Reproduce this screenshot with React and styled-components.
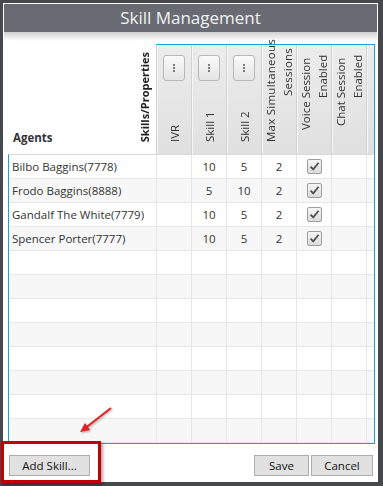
import React from "react";
import styled, { createGlobalStyle } from "styled-components";

const GlobalStyle = createGlobalStyle`
  html, body {
    margin: 0;
    padding: 0;
    background: #45484d;
    overflow: hidden;
  }
  * { box-sizing: border-box; }
`;

const BLUE = "#1d9fd9";
const LINE = "#e6e6e6";

const columns = [
  { key: "ivr", label: ["IVR"], menu: true },
  { key: "s1", label: ["Skill 1"], menu: true },
  { key: "s2", label: ["Skill 2"], menu: true },
  { key: "max", label: ["Max Simultaneous", "Sessions"], spread: 0.25, top: 3 },
  { key: "voice", label: ["Voice Session\u00a0", "Enabled"] },
  { key: "chat", label: ["Chat Session\u00a0", "Enabled"] },
];

const agents = [
  { name: "Bilbo Baggins(7778)", ivr: "", s1: 10, s2: 5, max: 2, voice: true },
  { name: "Frodo Baggins(8888)", ivr: "", s1: 5, s2: 10, max: 2, voice: true },
  { name: "Gandalf The White(7779)", ivr: "", s1: 10, s2: 5, max: 2, voice: true },
  { name: "Spencer Porter(7777)", ivr: "", s1: 10, s2: 5, max: 2, voice: true },
];

const rows = [...agents, ...Array.from({ length: 8 }, () => null)];

const Page = styled.div`
  position: relative;
  width: 383px;
  height: 486px;
  padding: 3px;
  font-family: "Open Sans", "Noto Sans", sans-serif;
`;

const Dialog = styled.div`
  width: 375px;
  height: 479px;
  background: #fff;
  padding: 1px;
  display: flex;
  flex-direction: column;
`;

const TitleBar = styled.div`
  height: 28px;
  background: #686b72;
  color: #f2f2f2;
  font-size: 17px;
  line-height: 28px;
  text-align: center;
`;

const Content = styled.div`
  flex: 1;
  display: flex;
  flex-direction: column;
  padding: 12px 2px 0 4px;
  background: linear-gradient(to bottom, #cfcfcf 0, #ffffff 9px);
`;

const Grid = styled.div`
  width: 367px;
  height: 400px;
  display: flex;
  flex-direction: column;
  color: #333;
`;

const HeadRow = styled.div`
  display: flex;
  height: 111px;
`;

const Corner = styled.div`
  width: 148px;
  display: flex;
  align-items: flex-end;
  justify-content: space-between;
  padding: 0 5px 9px 5px;
  background: #fff;
`;

const AgentsLabel = styled.div`
  font-weight: 700;
  font-size: 11.5px;
  line-height: 14px;
`;

const SkillsLabel = styled.div`
  writing-mode: vertical-rl;
  transform: rotate(180deg);
  font-weight: 700;
  font-size: 11px;
  line-height: 12px;
  margin-bottom: 3px;
  color: #222;
`;

const HeadCols = styled.div`
  display: flex;
  border-top: 1px solid ${BLUE};
  border-right: 1px solid ${BLUE};
  border-left: 1px solid #d0d0d0;
`;

const HeadCell = styled.div`
  width: ${(p) => p.$w || 35}px;
  display: flex;
  flex-direction: column;
  align-items: center;
  padding: ${(p) => p.$top ?? 10}px 0 12px;
  background: linear-gradient(to bottom, #ececec, #e0e0e0);
  border-right: ${(p) => (p.$last ? "none" : "1px solid #d2d2d2")};
  box-shadow: inset 1px 0 0 #f6f6f6;
`;

const MenuButton = styled.div`
  width: 22px;
  height: 26px;
  border: 1px solid #b8b8b8;
  border-radius: 3px;
  background: linear-gradient(to bottom, #fafafa, #e4e4e4);
  display: flex;
  align-items: center;
  justify-content: center;
  flex-shrink: 0;
`;

const HeadText = styled.div`
  flex: 1;
  min-height: 0;
  writing-mode: vertical-rl;
  transform: rotate(180deg);
  text-align: ${(p) => p.$align};
  white-space: pre;
  font-size: 11.5px;
  line-height: 17px;
  letter-spacing: ${(p) => p.$spread || 0}px;
  color: #333;
`;

const Body = styled.div`
  border: 1px solid ${BLUE};
  border-top: 1px solid #dadada;
`;

const Row = styled.div`
  display: grid;
  grid-template-columns: 148px repeat(6, 35px) 7px;
  height: 24px;
  background: ${(p) => (p.$alt ? "#f7f7f7" : "#fff")};
`;

const Cell = styled.div`
  border-right: 1px solid ${LINE};
  border-bottom: 1px solid ${LINE};
  display: flex;
  align-items: center;
  justify-content: ${(p) => (p.$left ? "flex-start" : "center")};
  padding-left: ${(p) => (p.$left ? "3px" : "0")};
  font-size: 11.5px;
  color: #333;
  white-space: nowrap;
`;

const Filler = styled.div`
  border-bottom: 1px solid ${LINE};
`;

const Check = styled.div`
  width: 15px;
  height: 15px;
  border: 1px solid #9e9e9e;
  border-radius: 2px;
  background: linear-gradient(to bottom, #f4f4f4, #dcdcdc);
  display: flex;
  align-items: center;
  justify-content: center;
`;

const Footer = styled.div`
  display: flex;
  gap: 2px;
  margin-top: 11px;
  padding: 0 2px 0 1px;
`;

const Button = styled.button`
  width: ${(p) => p.$w}px;
  height: 21px;
  margin-right: ${(p) => (p.$push ? "auto" : "0")};
  border: 1px solid #adadad;
  background: #e1e1e1;
  font-family: "Open Sans", "Noto Sans", sans-serif;
  font-size: 11.5px;
  color: #111;
  padding: 0;
  border-radius: 0;
`;

const Highlight = styled.div`
  position: absolute;
  left: 1px;
  top: 441px;
  width: 100px;
  height: 42px;
  border: 3px solid #c30000;
  box-shadow: 2px 2px 3px rgba(0, 0, 0, 0.35);
  pointer-events: none;
`;

const Arrow = styled.svg`
  position: absolute;
  left: 70px;
  top: 400px;
  filter: drop-shadow(1px 1px 1px rgba(0, 0, 0, 0.35));
`;

const Dots = () => (
  <svg width="4" height="10" viewBox="0 0 4 10">
    <circle cx="2" cy="2" r="0.9" fill="#444" />
    <circle cx="2" cy="5" r="0.9" fill="#444" />
    <circle cx="2" cy="8" r="0.9" fill="#444" />
  </svg>
);

const CheckMark = () => (
  <svg width="11" height="11" viewBox="0 0 11 11">
    <path d="M1.6 5.6 L4.2 8.4 L9.6 1.8" fill="none" stroke="#4d4d4d" strokeWidth="1.7" />
  </svg>
);

export default function App() {
  return (
    <>
      <GlobalStyle />
      <Page>
        <Dialog>
          <TitleBar>Skill Management</TitleBar>
          <Content>
            <Grid>
              <HeadRow>
                <Corner>
                  <AgentsLabel>Agents</AgentsLabel>
                  <SkillsLabel>Skills/Properties</SkillsLabel>
                </Corner>
                <HeadCols>
                  {columns.map((c) => (
                    <HeadCell key={c.key} $top={c.top}>
                      {c.menu && (
                        <MenuButton>
                          <Dots />
                        </MenuButton>
                      )}
                      <HeadText $align={c.menu ? "start" : "end"} $spread={c.spread}>
                        {c.label.join("\n")}
                      </HeadText>
                    </HeadCell>
                  ))}
                  <HeadCell $w={7} $last />
                </HeadCols>
              </HeadRow>
              <Body>
                {rows.map((r, i) => (
                  <Row key={i} $alt={i % 2 === 1}>
                    <Cell $left>{r ? r.name : ""}</Cell>
                    <Cell>{r ? r.ivr : ""}</Cell>
                    <Cell>{r ? r.s1 : ""}</Cell>
                    <Cell>{r ? r.s2 : ""}</Cell>
                    <Cell>{r ? r.max : ""}</Cell>
                    <Cell>
                      {r && r.voice && (
                        <Check>
                          <CheckMark />
                        </Check>
                      )}
                    </Cell>
                    <Cell />
                    <Filler />
                  </Row>
                ))}
              </Body>
            </Grid>
            <Footer>
              <Button $w={81} $push>Add Skill...</Button>
              <Button $w={55}>Save</Button>
              <Button $w={62}>Cancel</Button>
            </Footer>
          </Content>
        </Dialog>
        <Highlight />
        <Arrow width="50" height="40" viewBox="0 0 50 40">
          <line x1="41" y1="8" x2="16" y2="27.5" stroke="#e52020" strokeWidth="2" />
          <polygon points="10,32 20,30 15,23" fill="#e52020" />
        </Arrow>
      </Page>
    </>
  );
}
